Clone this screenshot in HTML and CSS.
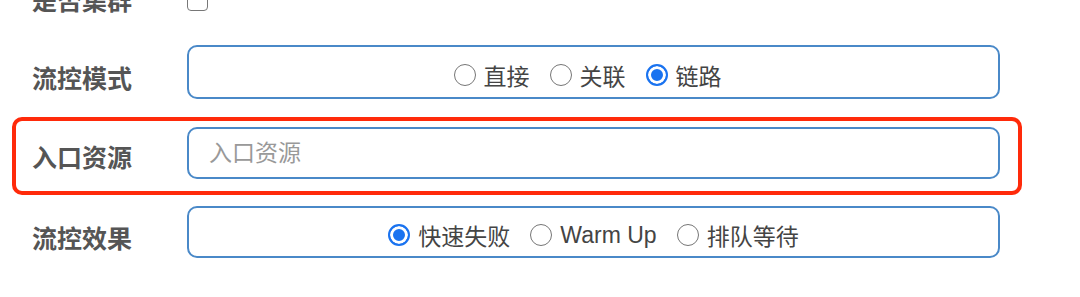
FILE: index.html
```html
<!DOCTYPE html>
<html lang="zh-CN">
	<head>
		<meta charset="UTF-8" />
		<meta name="viewport" content="width=device-width, initial-scale=1.0" />
		<title>流控规则</title>

		<link rel="stylesheet" href="styles.css">
	</head>
	<body>
		<form class="rule_form">
			<div class="form_row row_check">
				<label class="form_label">是否集群</label>
				<input type="checkbox" class="check" />
			</div>
			<div class="form_row row_mode">
				<label class="form_label">流控模式</label>
				<div class="radio_box">
					<label class="radio_item"><input type="radio" name="strategy" />直接</label>
					<label class="radio_item"><input type="radio" name="strategy" />关联</label>
					<label class="radio_item"><input type="radio" name="strategy" checked />链路</label>
				</div>
			</div>
			<div class="form_row row_ref highlight">
				<label class="form_label">入口资源</label>
				<input type="text" class="text_box" placeholder="入口资源" />
			</div>
			<div class="form_row row_effect">
				<label class="form_label">流控效果</label>
				<div class="radio_box">
					<label class="radio_item"><input type="radio" name="behavior" checked />快速失败</label>
					<label class="radio_item"><input type="radio" name="behavior" />Warm Up</label>
					<label class="radio_item"><input type="radio" name="behavior" />排队等待</label>
				</div>
			</div>
		</form>
	</body>
</html>
```

FILE: styles.css
```css
* {
	padding: 0;
	margin: 0;
	box-sizing: border-box;
}

body {
	background-color: #fff;
	font-family: "Liberation Sans", "Noto Sans CJK SC", sans-serif;
	overflow: hidden;
}

.rule_form {
	width: 1000px;
	padding-left: 32px;
	margin-top: -27px;
	display: flex;
	flex-direction: column;
}

.form_row {
	position: relative;
	display: flex;
	align-items: center;
}

.form_label {
	width: 155px;
	flex-shrink: 0;
	font-size: 25px;
	font-weight: bold;
	color: #555;
}

.row_check {
	height: 54px;
	margin-bottom: 18px;
}

.row_check .form_label {
	margin-top: -3px;
}

.check {
	appearance: none;
	flex-shrink: 0;
	width: 21px;
	height: 21px;
	border: 1.5px solid #777;
	border-radius: 4px;
	background-color: #fff;
}

.row_mode {
	height: 54px;
	margin-bottom: 28px;
}

.row_ref {
	height: 52px;
	margin-bottom: 27px;
}

.row_effect {
	height: 52px;
}

.row_mode .form_label,
.row_effect .form_label {
	margin-top: 9px;
}

.row_ref .form_label {
	margin-top: 5px;
}

.radio_box,
.text_box {
	flex: 1;
	height: 100%;
	border: 2px solid #4a89c8;
	border-radius: 10px;
	background-color: #fff;
}

.radio_box {
	display: flex;
	justify-content: center;
	align-items: center;
	gap: 20px;
	padding-top: 6px;
}

.row_mode .radio_box {
	padding-right: 12px;
}

.radio_item {
	display: flex;
	align-items: center;
	gap: 8px;
	font-size: 23px;
	color: #444;
}

.radio_item input {
	appearance: none;
	flex-shrink: 0;
	width: 22px;
	height: 22px;
	border: 1.5px solid #767676;
	border-radius: 50%;
	background-color: #fff;
}

.radio_item input:checked {
	border: 2px solid #1a73f0;
	background-color: #1a73f0;
	box-shadow: inset 0 0 0 3px #fff;
}

.text_box {
	padding: 0 20px;
	font-size: 23px;
	font-family: "Liberation Sans", "Noto Sans CJK SC", sans-serif;
	color: #444;
	outline: none;
}

.text_box::placeholder {
	color: #999;
}

.highlight::after {
	content: "";
	position: absolute;
	left: -20px;
	right: -22px;
	top: -10px;
	bottom: -16px;
	border: 4px solid #ff2a0a;
	border-radius: 10px;
	pointer-events: none;
}
```
